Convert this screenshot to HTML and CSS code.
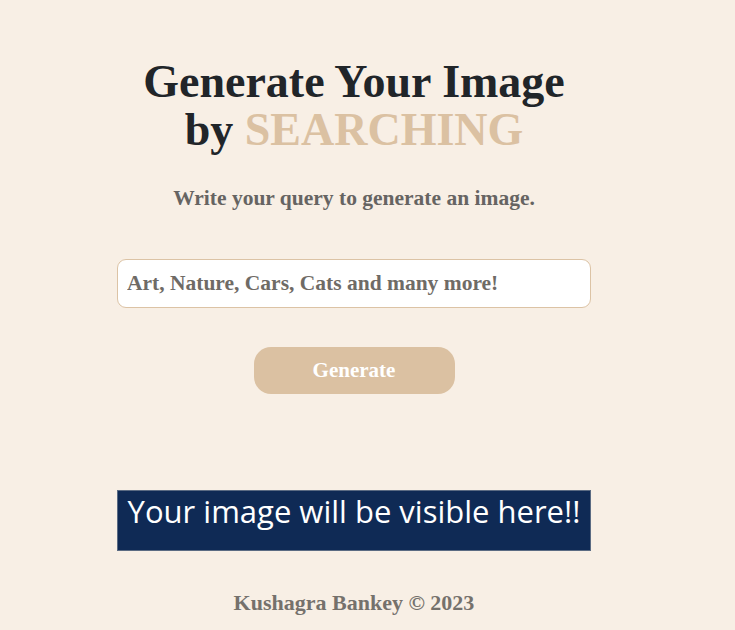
FILE: index.html
```html
<!DOCTYPE html>
<html>
<head>
<meta charset="utf-8">
<link rel="stylesheet" href="styles.css">
</head>
<body>
<main class="wrap">
  <h1 class="title">Generate Your Image<br>by <span class="accent">SEARCHING</span></h1>
  <p class="sub">Write your query to generate an image.</p>
  <input class="query" type="text" placeholder="Art, Nature, Cars, Cats and many more!">
  <button class="btn">Generate</button>
  <div class="result">Your image will be visible here!!</div>
  <footer class="foot">Kushagra Bankey © 2023</footer>
</main>
</body>
</html>
```
FILE: styles.css
```css
html, body { margin: 0; padding: 0; }
body {
  background: #f8efe5;
  font-family: "Liberation Serif", "DejaVu Serif", serif;
  height: 630px;
  overflow: hidden;
}
.wrap {
  width: 474px;
  margin-left: 117px;
  display: flex;
  flex-direction: column;
  align-items: center;
}
.title {
  margin: 58px 0 0;
  font-size: 46px;
  line-height: 48px;
  font-weight: 700;
  color: #212529;
  text-align: center;
}
.accent { color: #dbc1a2; }
.sub {
  margin: 33px 0 0;
  font-size: 21.5px;
  line-height: 22px;
  font-weight: 700;
  color: #666462;
}
.query {
  box-sizing: border-box;
  margin-top: 50px;
  width: 474px;
  height: 49px;
  border: 1px solid #dcc3a5;
  border-radius: 9px;
  background: #fff;
  padding: 0 9px;
  font-family: inherit;
  font-size: 21.5px;
  font-weight: 700;
  outline: none;
}
.query::placeholder { color: #6f6b66; opacity: 1; }
.btn {
  margin-top: 39px;
  width: 201px;
  height: 47px;
  border: none;
  border-radius: 17px;
  background: #dbc1a2;
  color: #fff;
  font-family: inherit;
  font-size: 21px;
  font-weight: 700;
}
.result {
  box-sizing: border-box;
  margin-top: 96px;
  width: 474px;
  height: 61px;
  background: #0f2a55;
  border: 1px solid #5b6b83;
  color: #fff;
  font-family: "Open Sans", "Noto Sans", sans-serif;
  font-size: 31px;
  line-height: 40px;
  text-align: center;
}
.foot {
  margin-top: 41px;
  font-size: 22px;
  line-height: 22px;
  font-weight: 700;
  color: #75716c;
}
```
